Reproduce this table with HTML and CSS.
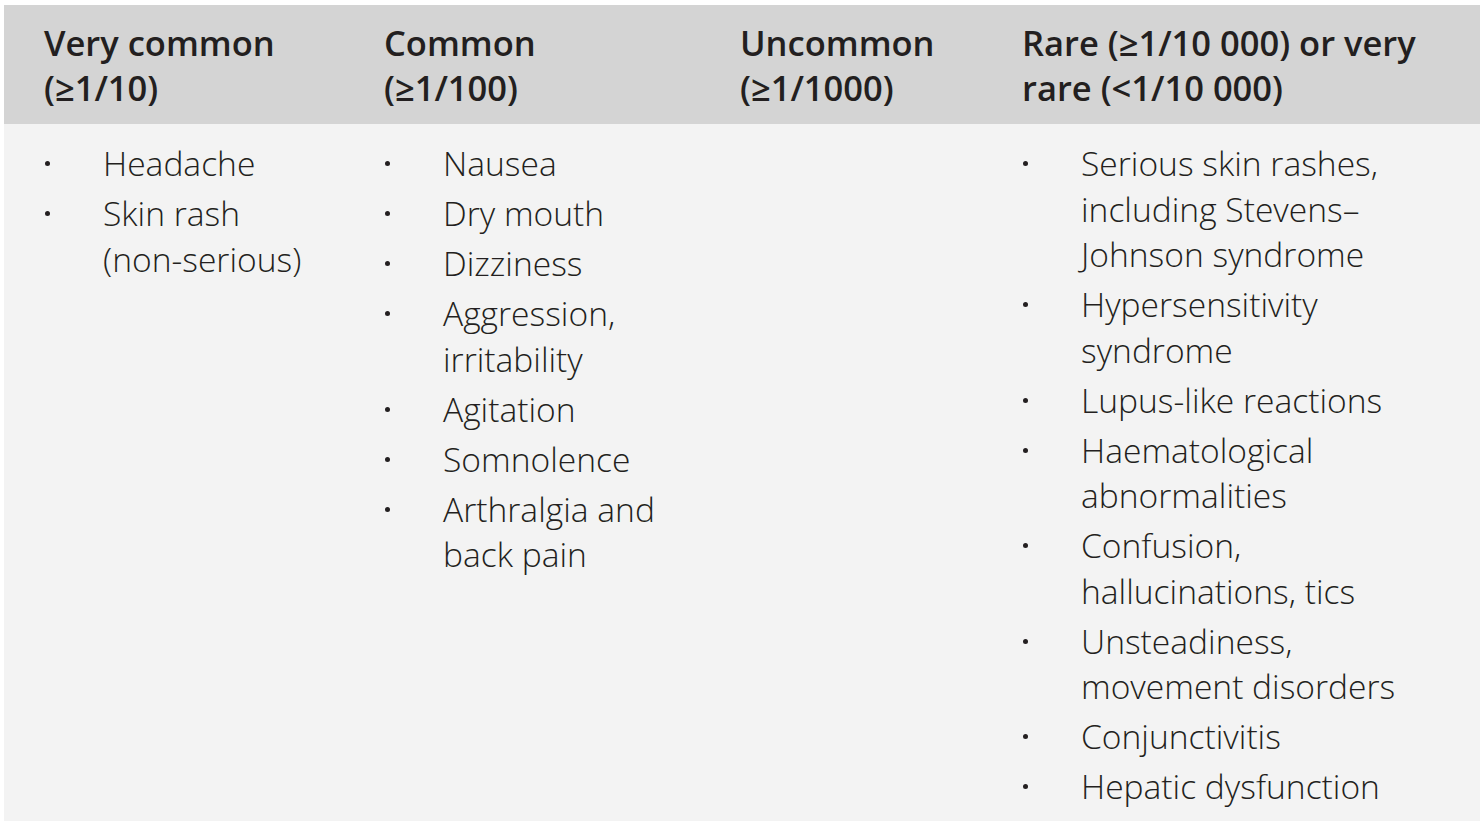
FILE: index.html
```html
<!DOCTYPE html>
<html>
<head>
<meta charset="utf-8">
<link rel="stylesheet" href="styles.css">
</head>
<body>
<table class="ae">
  <thead>
    <tr>
      <th class="c1">Very common<br>(≥1/10)</th>
      <th class="c2">Common<br>(≥1/100)</th>
      <th class="c3">Uncommon<br>(≥1/1000)</th>
      <th class="c4">Rare (≥1/10 000) or very<br>rare (&lt;1/10 000)</th>
    </tr>
  </thead>
  <tbody>
    <tr>
      <td>
        <ul class="list">
          <li>Headache</li>
          <li>Skin rash<br>(non-serious)</li>
        </ul>
      </td>
      <td>
        <ul class="list">
          <li>Nausea</li>
          <li>Dry mouth</li>
          <li>Dizziness</li>
          <li>Aggression,<br>irritability</li>
          <li>Agitation</li>
          <li>Somnolence</li>
          <li>Arthralgia and<br>back pain</li>
        </ul>
      </td>
      <td></td>
      <td>
        <ul class="list">
          <li>Serious skin rashes,<br>including Stevens–<br>Johnson syndrome</li>
          <li>Hypersensitivity<br>syndrome</li>
          <li>Lupus-like reactions</li>
          <li>Haematological<br>abnormalities</li>
          <li>Confusion,<br>hallucinations, tics</li>
          <li>Unsteadiness,<br>movement disorders</li>
          <li>Conjunctivitis</li>
          <li>Hepatic dysfunction</li>
        </ul>
      </td>
    </tr>
  </tbody>
</table>
</body>
</html>
```
FILE: styles.css
```css
html, body {
  margin: 0;
  padding: 0;
  background: #ffffff;
}
body {
  padding: 5px 4px 0 4px;
  font-family: "Open Sans", "Liberation Sans", sans-serif;
  color: #231f20;
}
.ae {
  border-collapse: collapse;
  width: 1476px;
  table-layout: fixed;
}
.ae th {
  background: #d4d4d4;
  font-weight: 600;
  font-size: 34.5px;
  line-height: 45px;
  text-align: left;
  vertical-align: top;
  padding: 15px 4px 14px 40px;
}
.c1 { width: 296px; }
.c2 { width: 312px; }
.c3 { width: 238px; }
.c4 { width: 454px; }
.ae td {
  background: #f3f3f3;
  vertical-align: top;
  padding: 17px 4px 11px 40px;
}
.list {
  list-style: none;
  margin: 0;
  padding: 0;
  display: flex;
  flex-direction: column;
  gap: 4.5px;
}
.list li {
  position: relative;
  padding-left: 59px;
  font-weight: 300;
  font-size: 33.6px;
  line-height: 45.5px;
}
.list li::before {
  content: "";
  position: absolute;
  left: 1px;
  top: 20px;
  width: 5px;
  height: 5px;
  border-radius: 50%;
  background: #231f20;
}
```
